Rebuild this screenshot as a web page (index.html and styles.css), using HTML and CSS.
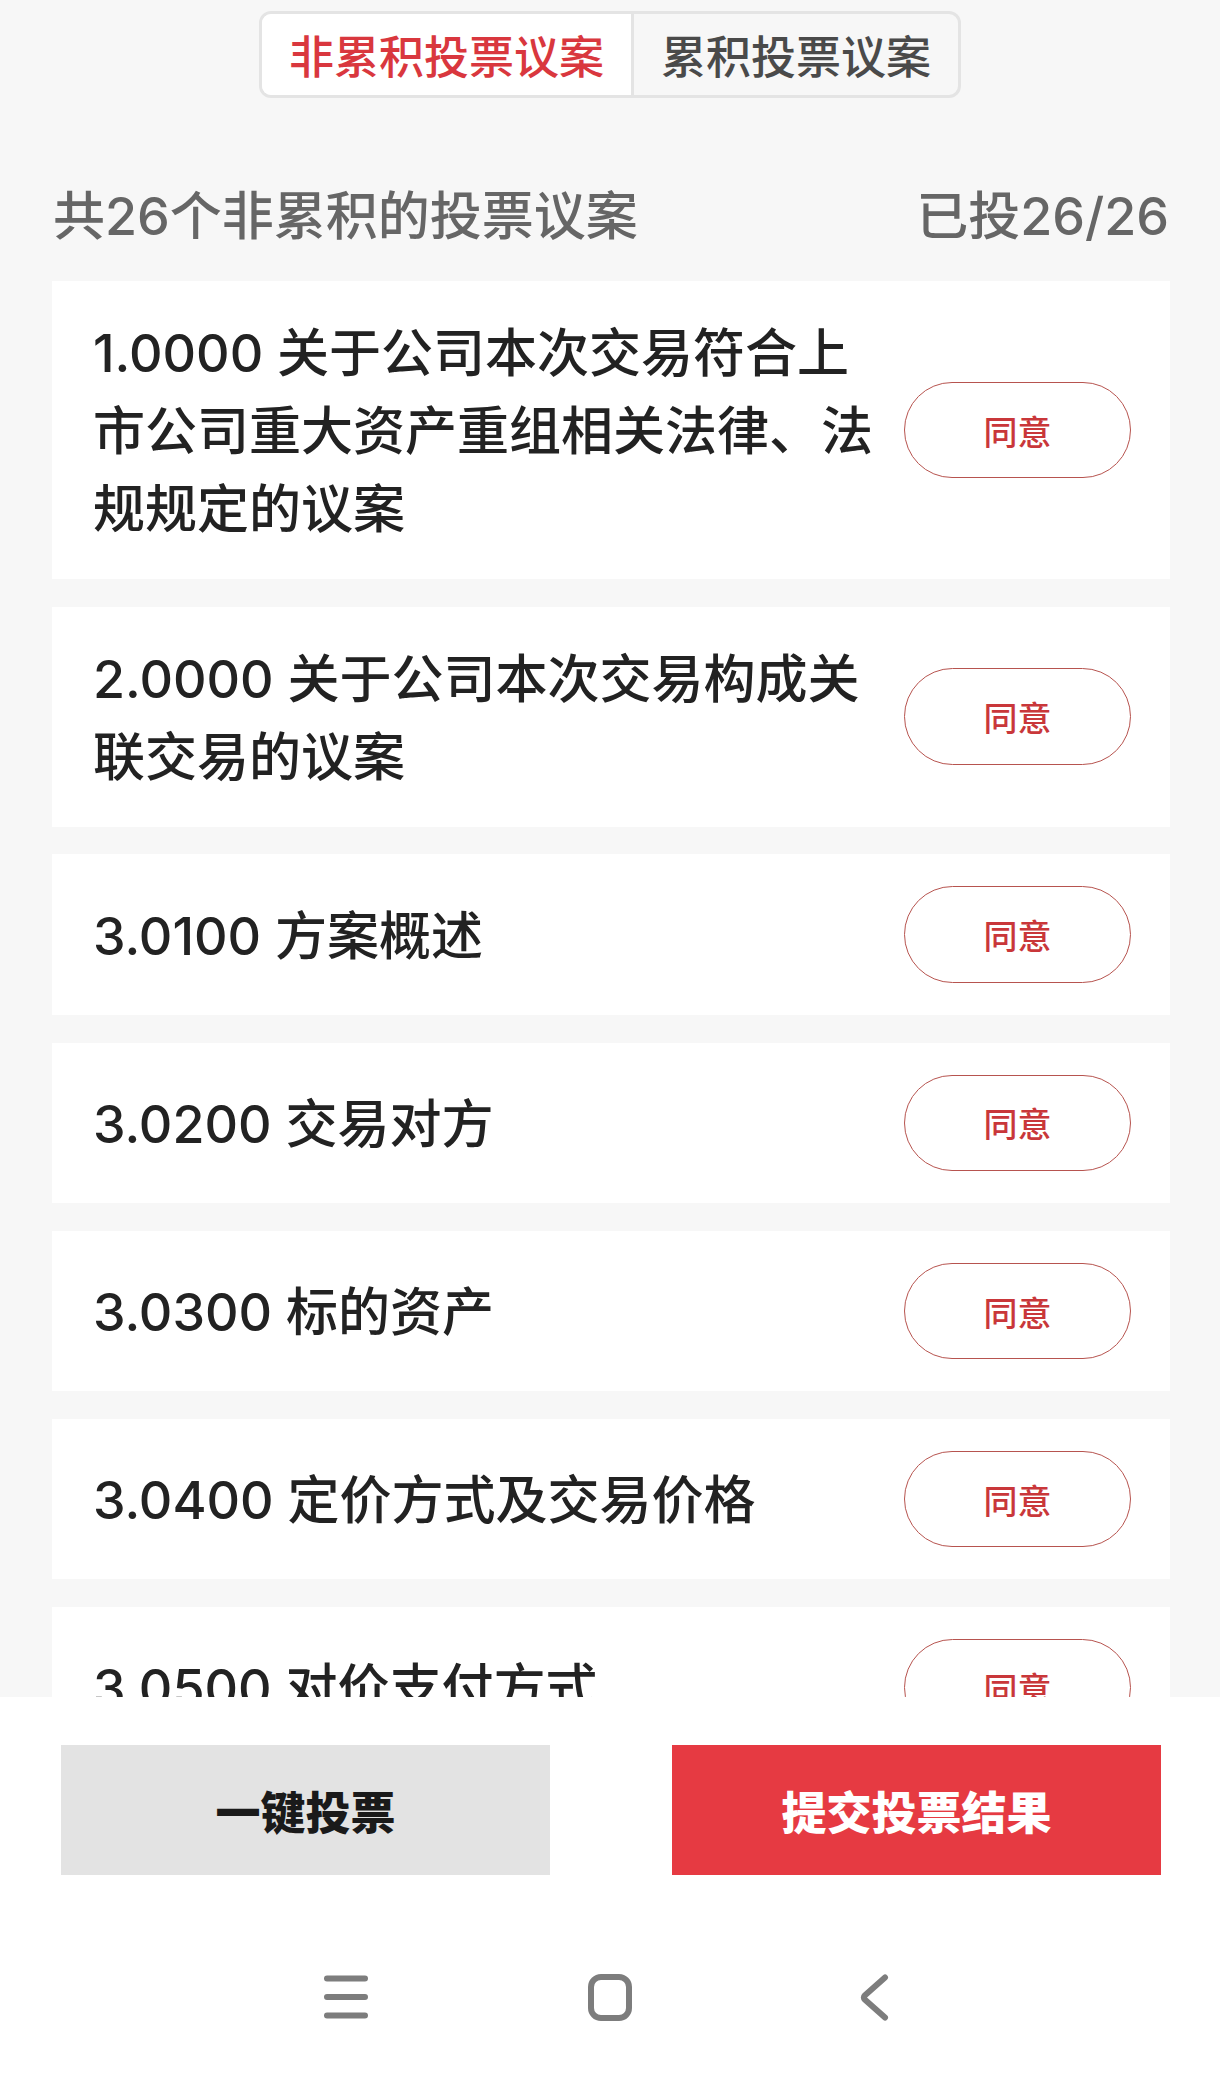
FILE: index.html
```html
<!DOCTYPE html>
<html>
<head>
	<meta charset="utf-8">
	<title>投票议案</title>
	<link rel="stylesheet" href="styles.css">
</head>
<body>
<div class="page">
    <div class="main">
        <div class="tabs-wrap">
            <div class="tabs">
                <div class="tab active">非累积投票议案</div>
                <div class="tab">累积投票议案</div>
            </div>
        </div>

        <div class="summary">
            <span>共26个非累积的投票议案</span>
            <span>已投26/26</span>
        </div>

        <div class="list">
            <div class="item">
                <p class="item-text">1.0000 关于公司本次交易符合上市公司重大资产重组相关法律、法规规定的议案</p>
                <button class="agree">同意</button>
            </div>
            <div class="item">
                <p class="item-text">2.0000 关于公司本次交易构成关联交易的议案</p>
                <button class="agree">同意</button>
            </div>
            <div class="item">
                <p class="item-text">3.0100 方案概述</p>
                <button class="agree">同意</button>
            </div>
            <div class="item">
                <p class="item-text">3.0200 交易对方</p>
                <button class="agree">同意</button>
            </div>
            <div class="item">
                <p class="item-text">3.0300 标的资产</p>
                <button class="agree">同意</button>
            </div>
            <div class="item">
                <p class="item-text">3.0400 定价方式及交易价格</p>
                <button class="agree">同意</button>
            </div>
            <div class="item">
                <p class="item-text">3.0500 对价支付方式</p>
                <button class="agree">同意</button>
            </div>
            <div class="item">
                <p class="item-text">3.0600 发行股份的种类和面值</p>
                <button class="agree">同意</button>
            </div>
        </div>
    </div>

    <div class="footer">
        <div class="actions">
            <button class="btn btn-gray">一键投票</button>
            <button class="btn btn-red">提交投票结果</button>
        </div>
        <div class="navbar">
            <div class="nav-cell">
                <svg width="46" height="46" viewBox="0 0 46 46">
                    <path d="M4 4.5H42M4 23H42M4 41.5H42" fill="none" stroke="#7d7d7d" stroke-width="6" stroke-linecap="round"/>
                </svg>
            </div>
            <div class="nav-cell">
                <svg width="44" height="47" viewBox="0 0 44 47">
                    <rect x="3" y="3" width="38" height="41" rx="10" fill="none" stroke="#7d7d7d" stroke-width="6"/>
                </svg>
            </div>
            <div class="nav-cell">
                <svg width="30" height="47" viewBox="0 0 30 47">
                    <path d="M26 3.5L6 21.2Q3.6 23.5 6 25.8L26 43.5" fill="none" stroke="#7d7d7d" stroke-width="6" stroke-linecap="round" stroke-linejoin="round"/>
                </svg>
            </div>
        </div>
    </div>
</div>
</body>
</html>
```

FILE: styles.css
```css
* {
	margin: 0;
	padding: 0;
	box-sizing: border-box;
}

body {
	background-color: #f7f7f7;
	font-family: "Noto Sans CJK SC", "Noto Sans", sans-serif;
	color: #222;
}

.page {
	width: 1220px;
	height: 2074px;
	display: flex;
	flex-direction: column;
	overflow: hidden;
}

.main {
	flex: 1;
	overflow: hidden;
}

.tabs-wrap {
	display: flex;
	justify-content: center;
	padding-top: 11px;
}

.tabs {
	display: flex;
	height: 87px;
	border: 3px solid #e4e4e4;
	border-radius: 12px;
	overflow: hidden;
	background-color: #f7f7f7;
}

.tab {
	padding: 0 27px;
	line-height: 81px;
	font-size: 45px;
	font-weight: 500;
	color: #4a4a4a;
}

.tab + .tab {
	border-left: 3px solid #e4e4e4;
}

.tab.active {
	background-color: #fff;
	color: #d9373e;
}

.summary {
	display: flex;
	justify-content: space-between;
	padding: 0 51px 0 53px;
	margin: 80px 0 26px;
	font-family: "Inter", "Noto Sans CJK SC", sans-serif;
	font-size: 52px;
	line-height: 77px;
	font-weight: 500;
	color: #666;
}

.list {
	display: flex;
	flex-direction: column;
	gap: 27.7px;
	padding: 0 50px 0 52px;
}

.item {
	display: flex;
	align-items: center;
	gap: 28px;
	padding: 32px 39px 32px 41px;
	background-color: #fff;
}

.item-text {
	flex: 1;
	margin: 2px 0 -2px;
	font-family: "Inter", "Noto Sans CJK SC", sans-serif;
	font-size: 52px;
	line-height: 78px;
	font-weight: 500;
	color: #222;
}

.agree {
	flex: none;
	width: 227px;
	height: 96.5px;
	border: 1.5px solid #b7544f;
	border-radius: 50px;
	background-color: #fff;
	color: #c9373a;
	font-family: inherit;
	font-size: 34px;
	font-weight: 500;
}

.footer {
	height: 377px;
	background-color: #fff;
}

.actions {
	display: flex;
	justify-content: space-between;
	padding: 48px 59px 0 61px;
}

.btn {
	width: 489px;
	height: 130px;
	border: none;
	font-family: inherit;
	font-size: 45px;
	font-weight: 900;
}

.btn-gray {
	background-color: #e3e3e3;
	color: #1a1a1a;
}

.btn-red {
	background-color: #e63a42;
	color: #fff;
}

.navbar {
	display: flex;
	justify-content: center;
	height: 92px;
	margin-top: 76px;
}

.nav-cell {
	width: 264px;
	display: flex;
	align-items: center;
	justify-content: center;
}
```
